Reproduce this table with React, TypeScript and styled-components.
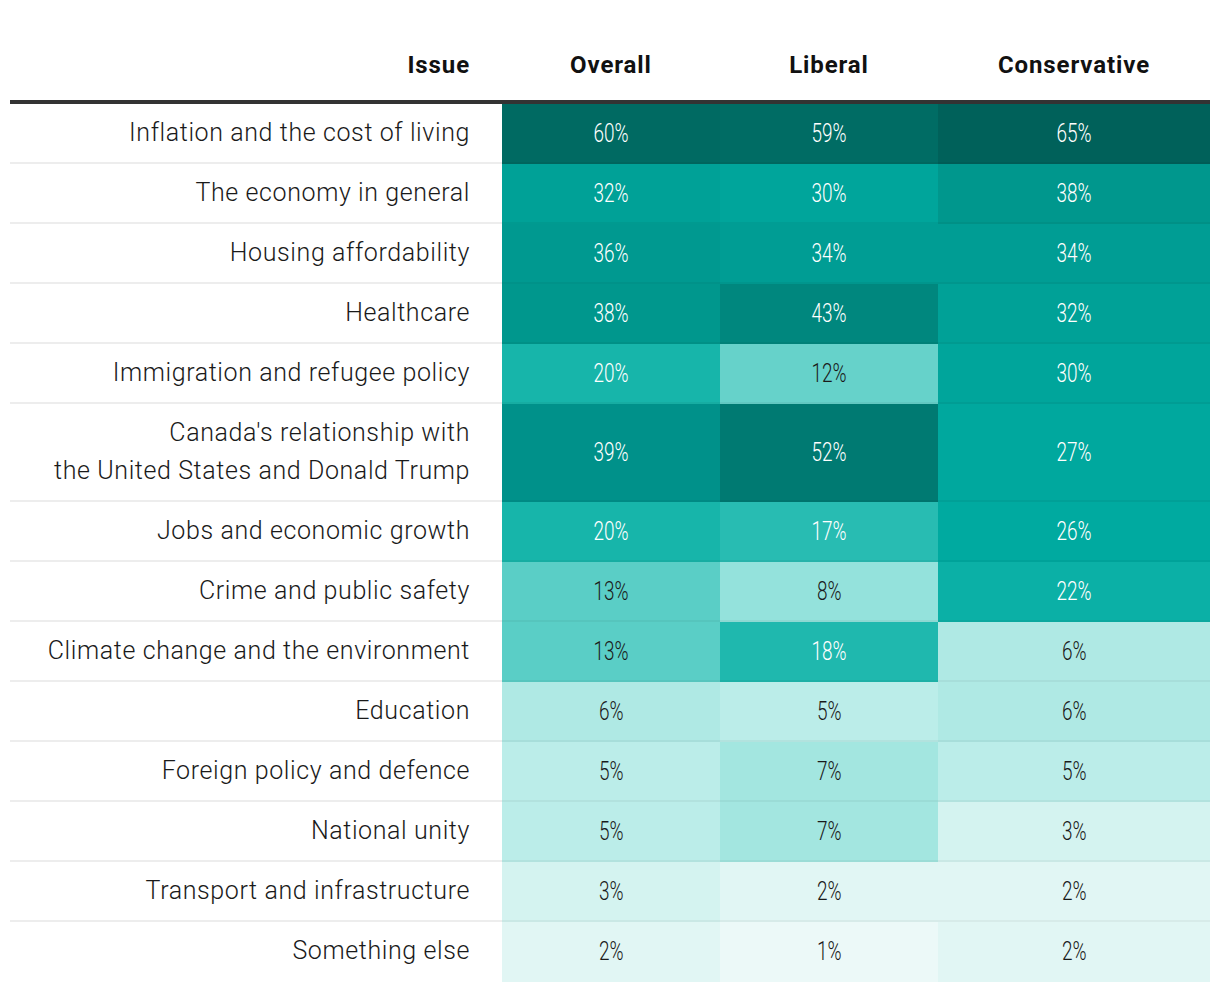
import React from 'react';
import styled, { createGlobalStyle } from 'styled-components';

interface Row {
  issue: string[];
  overall: number;
  liberal: number;
  conservative: number;
  tall?: boolean;
}

const rows: Row[] = [
  { issue: ['Inflation and the cost of living'], overall: 60, liberal: 59, conservative: 65 },
  { issue: ['The economy in general'], overall: 32, liberal: 30, conservative: 38 },
  { issue: ['Housing affordability'], overall: 36, liberal: 34, conservative: 34 },
  { issue: ['Healthcare'], overall: 38, liberal: 43, conservative: 32 },
  { issue: ['Immigration and refugee policy'], overall: 20, liberal: 12, conservative: 30 },
  {
    issue: ["Canada's relationship with", 'the United States and Donald Trump'],
    overall: 39,
    liberal: 52,
    conservative: 27,
    tall: true,
  },
  { issue: ['Jobs and economic growth'], overall: 20, liberal: 17, conservative: 26 },
  { issue: ['Crime and public safety'], overall: 13, liberal: 8, conservative: 22 },
  { issue: ['Climate change and the environment'], overall: 13, liberal: 18, conservative: 6 },
  { issue: ['Education'], overall: 6, liberal: 5, conservative: 6 },
  { issue: ['Foreign policy and defence'], overall: 5, liberal: 7, conservative: 5 },
  { issue: ['National unity'], overall: 5, liberal: 7, conservative: 3 },
  { issue: ['Transport and infrastructure'], overall: 3, liberal: 2, conservative: 2 },
  { issue: ['Something else'], overall: 2, liberal: 1, conservative: 2 },
];

// colour scale sampled from the chart
const scale: Record<number, string> = {
  65: '#00615a',
  60: '#006a62',
  59: '#006c64',
  52: '#007a72',
  43: '#00877e',
  39: '#00918a',
  38: '#00978d',
  36: '#009990',
  34: '#009d94',
  32: '#00a197',
  30: '#00a59b',
  27: '#00a89e',
  26: '#00aaa0',
  22: '#0bb0a6',
  20: '#17b5aa',
  18: '#1fb8ae',
  17: '#28bcb2',
  13: '#5acec6',
  12: '#66d2ca',
  8: '#94e2dc',
  7: '#a3e6e0',
  6: '#afe9e4',
  5: '#bbede9',
  3: '#d4f3f0',
  2: '#e1f6f4',
  1: '#ecf9f8',
};

const GlobalStyle = createGlobalStyle`
  body {
    margin: 0;
    background: #fff;
    font-family: Roboto, "Liberation Sans", sans-serif;
    color: #222;
  }
`;

const Page = styled.div`
  padding: 30px 10px 10px 10px;
`;

const Table = styled.div`
  display: grid;
  grid-template-columns: 492px 218px 218px 272px;
  width: 1200px;
`;

const HeadCell = styled.div<{ align: 'right' | 'center' }>`
  height: 70px;
  display: flex;
  align-items: center;
  justify-content: ${p => (p.align === 'right' ? 'flex-end' : 'center')};
  padding-right: ${p => (p.align === 'right' ? '32px' : '0')};
  border-bottom: 4px solid #333;
  font-size: 24px;
  font-weight: 700;
  color: #111;
  letter-spacing: 0.9px;
`;

const Label = styled.div<{ tall?: boolean; last?: boolean }>`
  height: ${p => (p.tall ? '96px' : '58px')};
  display: flex;
  flex-direction: column;
  align-items: flex-end;
  justify-content: center;
  padding-right: 32px;
  border-bottom: 2px solid ${p => (p.last ? 'transparent' : 'rgba(0, 0, 0, 0.07)')};
  font-size: 25px;
  font-weight: 300;
  line-height: 38px;
  color: #1a1a1a;
  letter-spacing: 0.6px;
  white-space: nowrap;
`;

const Cell = styled.div<{ bg: string; light: boolean; last?: boolean }>`
  display: flex;
  align-items: center;
  justify-content: center;
  background: ${p => p.bg};
  border-bottom: 2px solid ${p => (p.last ? 'transparent' : 'rgba(0, 0, 0, 0.045)')};
  color: ${p => (p.light ? '#ffffff' : '#1a1a1a')};
`;

const Value = styled.span`
  display: inline-block;
  font-size: 25px;
  font-weight: 300;
  transform: scaleX(0.76);
`;

const DataCell: React.FC<{ value: number; last?: boolean }> = ({ value, last }) => (
  <Cell bg={scale[value]} light={value >= 17} last={last}>
    <Value>{value}%</Value>
  </Cell>
);

export default function App() {
  return (
    <Page>
      <GlobalStyle />
      <Table>
        <HeadCell align="right">Issue</HeadCell>
        <HeadCell align="center">Overall</HeadCell>
        <HeadCell align="center">Liberal</HeadCell>
        <HeadCell align="center">Conservative</HeadCell>
        {rows.map((r, i) => {
          const last = i === rows.length - 1;
          return (
            <React.Fragment key={r.issue[0]}>
              <Label tall={r.tall} last={last}>
                {r.issue.map(line => (
                  <span key={line}>{line}</span>
                ))}
              </Label>
              <DataCell value={r.overall} last={last} />
              <DataCell value={r.liberal} last={last} />
              <DataCell value={r.conservative} last={last} />
            </React.Fragment>
          );
        })}
      </Table>
    </Page>
  );
}
